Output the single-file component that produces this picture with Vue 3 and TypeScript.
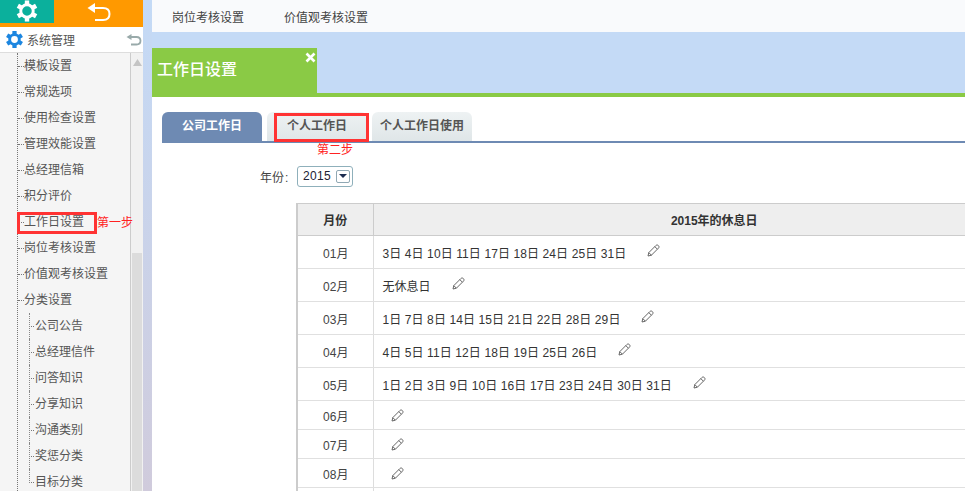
<script setup lang="ts">
const menu = ['模板设置', '常规选项', '使用检查设置', '管理效能设置', '总经理信箱', '积分评价', '工作日设置', '岗位考核设置', '价值观考核设置', '分类设置']
const sub = ['公司公告', '总经理信件', '问答知识', '分享知识', '沟通类别', '奖惩分类', '目标分类']
const rows: { m: string; days: number[]; none?: boolean }[] = [
  { m: '01月', days: [3, 4, 10, 11, 17, 18, 24, 25, 31] },
  { m: '02月', days: [], none: true },
  { m: '03月', days: [1, 7, 8, 14, 15, 21, 22, 28, 29] },
  { m: '04月', days: [4, 5, 11, 12, 18, 19, 25, 26] },
  { m: '05月', days: [1, 2, 3, 9, 10, 16, 17, 23, 24, 30, 31] },
  { m: '06月', days: [] },
  { m: '07月', days: [] },
  { m: '08月', days: [] },
]
const gearTeeth = [0, 60, 120, 180, 240, 300]
const text = (days: number[]) => days.map((d) => `${d}日`).join(' ')
</script>

<template>
  <div class="page">
    <aside class="side">
      <div class="top">
        <div class="top-set">
          <svg width="22" height="22" viewBox="0 0 24 24">
            <rect v-for="a in gearTeeth" :key="a" x="9.6" y="0.5" width="4.8" height="5" fill="#fff" :transform="`rotate(${a} 12 12)`" />
            <circle cx="12" cy="12" r="6.8" fill="none" stroke="#fff" stroke-width="3.2" />
          </svg>
        </div>
        <div class="top-back">
          <svg width="24" height="20" viewBox="0 0 24 20">
            <path d="M4 6H16C20 6 22.5 8 22.5 12S20 18 16 18H8" fill="none" stroke="#fff" stroke-width="2" />
            <path d="M8 1V11L0.5 6Z" fill="#fff" />
          </svg>
        </div>
      </div>
      <div class="sys">
        <svg width="17" height="17" viewBox="0 0 24 24">
          <rect v-for="a in gearTeeth" :key="a" x="9" y="0" width="6" height="6" fill="#1c86e0" :transform="`rotate(${a} 12 12)`" />
          <circle cx="12" cy="12" r="6.8" fill="none" stroke="#1c86e0" stroke-width="4" />
        </svg>
        <span class="sys-name">系统管理</span>
        <svg class="sys-back" width="16" height="12" viewBox="0 0 16 12">
          <path d="M2 3H10.5C13 3 14.5 4.6 14.5 6.8S13 10.5 10.5 10.5H5" fill="none" stroke="#9aa" stroke-width="1.8" />
          <path d="M5.5 0V6L0.5 3Z" fill="#9aa" />
        </svg>
      </div>
      <div class="tree-wrap">
        <ul class="tree">
          <li v-for="m in menu" :key="m" class="item" :class="{ mark: m === '工作日设置' }">
            <span>{{ m }}</span>
            <template v-if="m === '工作日设置'">
              <i class="box"></i>
              <em class="step one">第一步</em>
            </template>
          </li>
          <li class="subwrap">
            <ul class="subtree">
              <li v-for="s in sub" :key="s" class="item sub">{{ s }}</li>
            </ul>
          </li>
        </ul>
        <div class="scroll">
          <div class="arrow"><svg width="9" height="7" viewBox="0 0 9 7"><path d="M4.5 0L9 7H0Z" fill="#c4c4c4" /></svg></div>
          <div class="thumb"></div>
        </div>
      </div>
    </aside>

    <main class="main">
      <nav class="topnav">
        <span>岗位考核设置</span>
        <span>价值观考核设置</span>
      </nav>
      <div class="content">
        <header class="band">
          <div class="title">
            <span>工作日设置</span>
            <svg class="close" width="11" height="11" viewBox="0 0 11 11"><path d="M1.5 1.5L9.5 9.5M9.5 1.5L1.5 9.5" stroke="#fff" stroke-width="2.6" /></svg>
          </div>
        </header>
        <div class="panel">
          <div class="tabs">
            <div class="tab active">公司工作日</div>
            <div class="tab second">
              个人工作日
              <i class="box2"></i>
              <em class="step two">第二步</em>
            </div>
            <div class="tab third">个人工作日使用</div>
          </div>
          <div class="year">
            <label>年份<span class="colon">:</span></label>
            <div class="select">
              <span class="yr">2015</span>
              <b class="caret"><svg width="8" height="4" viewBox="0 0 8 4"><path d="M0 0H8L4 4Z" fill="#1c2c50" /></svg></b>
            </div>
          </div>
          <table class="grid">
            <colgroup><col class="c1" /><col /></colgroup>
            <thead>
              <tr><th>月份</th><th>2015年的休息日</th></tr>
            </thead>
            <tbody>
              <tr v-for="r in rows" :key="r.m" :class="r.days.length || r.none ? 'tall' : 'short'">
                <td class="mon">{{ r.m }}</td>
                <td class="days">
                  <span v-if="r.none">无休息日</span>
                  <span v-else class="dates">{{ text(r.days) }}</span>
                  <svg class="pen" :class="{ empty: !r.days.length && !r.none }" width="13" height="13" viewBox="0 0 13 13">
                    <path d="M1 12L1.8 8.6L8.8 1.6C9.6 0.8 10.6 0.8 11.4 1.6C12.2 2.4 12.2 3.4 11.4 4.2L4.4 11.2ZM1.8 8.6L4.4 11.2M7.8 2.6L10.4 5.2" fill="none" stroke="#666" stroke-width="1" />
                  </svg>
                </td>
              </tr>
              <tr class="short"><td class="mon"></td><td></td></tr>
            </tbody>
          </table>
        </div>
      </div>
    </main>
  </div>
</template>

<style>
html, body { margin: 0; padding: 0; background: #fff; }
</style>

<style scoped>
.page { width: 965px; height: 491px; display: flex; overflow: hidden; font: 12px "Liberation Sans", "Noto Sans CJK SC", sans-serif; color: #333; background: linear-gradient(#c4daf6, #d0cbdc); }
ul { list-style: none; margin: 0; padding: 0; }
em { font-style: normal; }
.side { width: 143px; flex: none; display: flex; flex-direction: column; background: #f5f5f5; }
.top { height: 27px; flex: none; display: flex; align-items: flex-start; background: #ff9900; }
.top-set { width: 54px; height: 23px; background: #0bb09c; display: flex; justify-content: center; overflow: hidden; }
.top-back { flex: 1; height: 23px; display: flex; justify-content: center; align-items: center; }
.sys { height: 26px; flex: none; box-sizing: border-box; display: flex; align-items: center; padding-left: 6px; background: #fff; border-bottom: 1px solid #ddd; color: #555; font-size: 12px; }
.sys-name { margin-left: 4px; }
.sys-back { margin-left: auto; margin-right: 1px; }
.tree-wrap { flex: 1; display: flex; min-height: 0; overflow: hidden; }
.tree { flex: 1; min-width: 0; margin-left: 17px; border-left: 1px dotted #777; color: #555; }
.item { height: 26px; line-height: 26px; position: relative; padding-left: 6px; white-space: nowrap; }
.item::before { content: ""; position: absolute; left: 0; top: 13px; width: 6px; border-top: 1px dotted #777; }
.subtree { margin-left: 11px; }
.sub { padding-left: 6px; }
.sub::before { left: 0; width: 5px; }
.sub::after { content: ""; position: absolute; left: 0; top: 0; bottom: 0; border-left: 1px dotted #888; }
.sub:last-child::after { bottom: 12px; }
.box { position: absolute; left: -1px; top: 3px; width: 74px; height: 16px; border: 3px solid #f33; }
.step { position: absolute; color: #f22; font-size: 12px; z-index: 2; }
.one { left: 79px; top: 1px; }
.scroll { width: 13px; flex: none; position: relative; background: #f1f1f1; border-left: 1px solid #ccc; box-sizing: border-box; }
.arrow { height: 17px; display: flex; justify-content: center; align-items: center; padding-top: 2px; box-sizing: border-box; }
.thumb { position: absolute; left: 1px; right: 1px; top: 200px; bottom: 0; background: #dcdcdc; }
.main { flex: 1; min-width: 0; display: flex; flex-direction: column; padding-left: 9px; }
.topnav { height: 32px; flex: none; background: #f9fafc; display: flex; align-items: center; gap: 40px; padding-left: 20px; color: #444; }
.content { flex: 1; min-height: 0; display: flex; flex-direction: column; background: #fff; }
.band { height: 61px; flex: none; background: #c4daf6; border-bottom: 4px solid #8aca45; display: flex; align-items: flex-end; }
.title { width: 165px; height: 45px; background: #8aca45; color: #fff; font-size: 16px; font-weight: 500; position: relative; padding-left: 5px; box-sizing: border-box; line-height: 44px; }
.close { position: absolute; left: 153px; top: 4px; }
.panel { padding: 15px 0 0 10px; flex: 1; min-height: 0; }
.tabs { height: 29px; display: flex; border-bottom: 2px solid #6e8ab3; width: 900px; font-weight: bold; }
.tab { height: 29px; line-height: 29px; text-align: center; border-radius: 6px 6px 0 0; position: relative; color: #555; background: linear-gradient(#eef2f3, #dfe6e8); }
.active { width: 100px; background: #6e8ab3; color: #fff; }
.second { width: 100px; margin-left: 5px; }
.third { width: 100px; margin-left: 5px; }
.box2 { position: absolute; left: 7px; top: 1px; width: 89px; height: 23px; border: 3px solid #f33; }
.two { left: 50px; top: 31px; font-weight: normal; line-height: 14px; }
.year { display: flex; align-items: center; margin-top: 22px; padding-left: 99px; height: 22px; color: #444; }
.year label { width: 36px; padding-top: 1px; margin-left: -1px; margin-right: 1px; }
.colon { margin-left: 1px; }
.select { width: 56px; height: 21px; box-sizing: border-box; border: 1px solid #8fb0bb; border-radius: 3px; display: flex; align-items: center; padding: 0 2px 0 5px; color: #223; justify-content: space-between; }
.yr { letter-spacing: 0.33px; }
.caret { width: 14px; height: 13px; box-sizing: border-box; border: 1px solid #90a8b4; border-radius: 2px; display: flex; align-items: center; justify-content: center; }
.grid { margin: 16px 0 0 134px; width: 760px; table-layout: fixed; border-collapse: collapse; border-left: 2px solid #ccc; }
.c1 { width: 76px; }
th { height: 31px; background: #eee; border: 1px solid #ccc; border-left: 0; color: #333; font-weight: bold; padding: 0; }
td { border-bottom: 1px solid #e0e0e0; padding: 0; }
.mon { text-align: center; border-right: 1px solid #ddd; color: #444; padding-left: 1px; }
.days { padding-left: 9px; color: #333; white-space: nowrap; }
.dates { letter-spacing: 0.1px; }
.tall td { height: 32px; }
.short td { height: 28px; }
.pen { margin-left: 21px; vertical-align: 1px; }
.pen.empty { margin-left: 8px; vertical-align: middle; }
</style>
